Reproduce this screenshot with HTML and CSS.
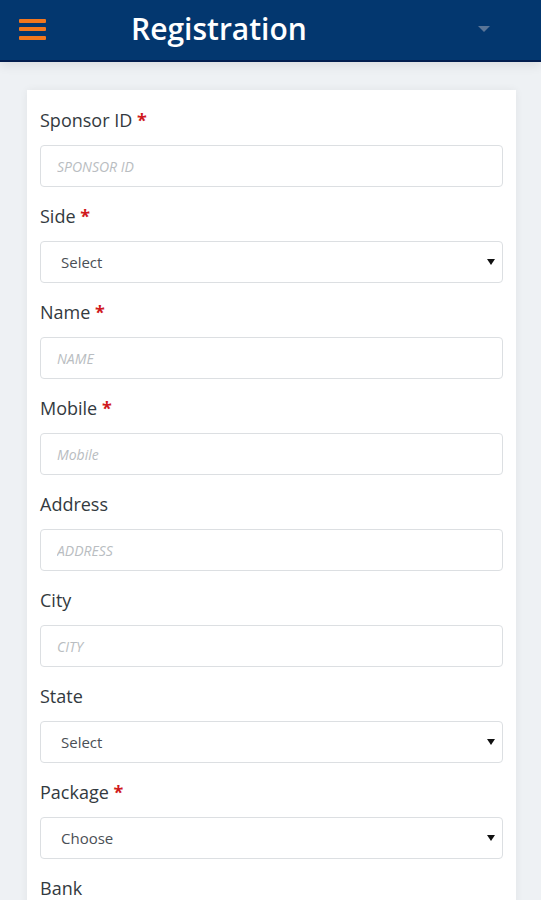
FILE: index.html
```html
<!DOCTYPE html>
<html lang="en">
<head>
<meta charset="utf-8">
<title>Registration</title>
<link rel="stylesheet" href="styles.css">
</head>
<body>
<header class="topbar">
  <div class="burger"><span></span><span></span><span></span></div>
  <h1 class="title">Registration</h1>
  <div class="caret"></div>
</header>
<main class="page">
  <form class="card">
    <div class="field">
      <label class="label">Sponsor ID <span class="req">*</span></label>
      <input class="input" type="text" placeholder="SPONSOR ID">
    </div>
    <div class="field">
      <label class="label">Side <span class="req">*</span></label>
      <div class="select-wrap"><select class="select"><option>Select</option></select></div>
    </div>
    <div class="field">
      <label class="label">Name <span class="req">*</span></label>
      <input class="input" type="text" placeholder="NAME">
    </div>
    <div class="field">
      <label class="label">Mobile <span class="req">*</span></label>
      <input class="input" type="text" placeholder="Mobile">
    </div>
    <div class="field">
      <label class="label">Address</label>
      <input class="input" type="text" placeholder="ADDRESS">
    </div>
    <div class="field">
      <label class="label">City</label>
      <input class="input" type="text" placeholder="CITY">
    </div>
    <div class="field">
      <label class="label">State</label>
      <div class="select-wrap"><select class="select"><option>Select</option></select></div>
    </div>
    <div class="field">
      <label class="label">Package <span class="req">*</span></label>
      <div class="select-wrap"><select class="select"><option>Choose</option></select></div>
    </div>
    <div class="field">
      <label class="label">Bank</label>
      <input class="input" type="text" placeholder="BANK">
    </div>
  </form>
</main>
</body>
</html>
```
FILE: styles.css
```css
* { box-sizing: border-box; }
html, body { margin: 0; padding: 0; }
body {
  font-family: "Open Sans", "Noto Sans", sans-serif;
  background: #eef1f4;
  width: 541px;
  height: 900px;
  overflow: hidden;
}
.topbar {
  height: 62px;
  background: #03376f;
  border-bottom: 2px solid #021d4e;
  display: flex;
  align-items: center;
  position: relative;
  box-shadow: 0 4px 10px rgba(0,0,0,0.08);
}
.burger {
  margin-left: 19px;
  width: 27px;
  display: flex;
  flex-direction: column;
  gap: 4.5px;
  margin-top: -2px;
}
.burger span {
  display: block;
  height: 4px;
  background: #f2771e;
  border-radius: 1px;
}
.title {
  margin: 0 0 0 85px;
  color: #ffffff;
  font-size: 30px;
  font-weight: 600;
  letter-spacing: 0;
  line-height: 1;
  margin-top: -3px;
}
.caret {
  margin-left: auto;
  margin-right: 51px;
  width: 0;
  height: 0;
  border-left: 6px solid transparent;
  border-right: 6px solid transparent;
  border-top: 6px solid #5a7597;
  margin-top: -2px;
}
.page {
  padding: 28px 25px 0 27px;
}
.card {
  background: #ffffff;
  padding: 18px 13px 0 13px;
  box-shadow: 0 0 8px rgba(0,0,0,0.06);
  min-height: 900px;
}
.field {
  margin-bottom: 17px;
}
.label {
  display: block;
  font-size: 18px;
  line-height: 24px;
  color: #333a40;
  margin-bottom: 13px;
}
.req {
  color: #d0191d;
  font-weight: 700;
}
.input, .select {
  display: block;
  width: 100%;
  height: 42px;
  border: 1.5px solid #dcdfe2;
  border-radius: 4px;
  background: #fff;
  font-family: "Open Sans", "Noto Sans", sans-serif;
  outline: none;
}
.input {
  padding: 0 16px;
  font-size: 14px;
}
.input::placeholder {
  color: #b9bdc1;
  font-style: italic;
}
.select-wrap { position: relative; }
.select {
  appearance: none;
  -webkit-appearance: none;
  padding: 0 20px;
  font-size: 15px;
  color: #4a4f55;
}
.select-wrap::after {
  content: "";
  position: absolute;
  right: 8px;
  top: 18px;
  border-left: 4px solid transparent;
  border-right: 4px solid transparent;
  border-top: 6px solid #111;
}
```
